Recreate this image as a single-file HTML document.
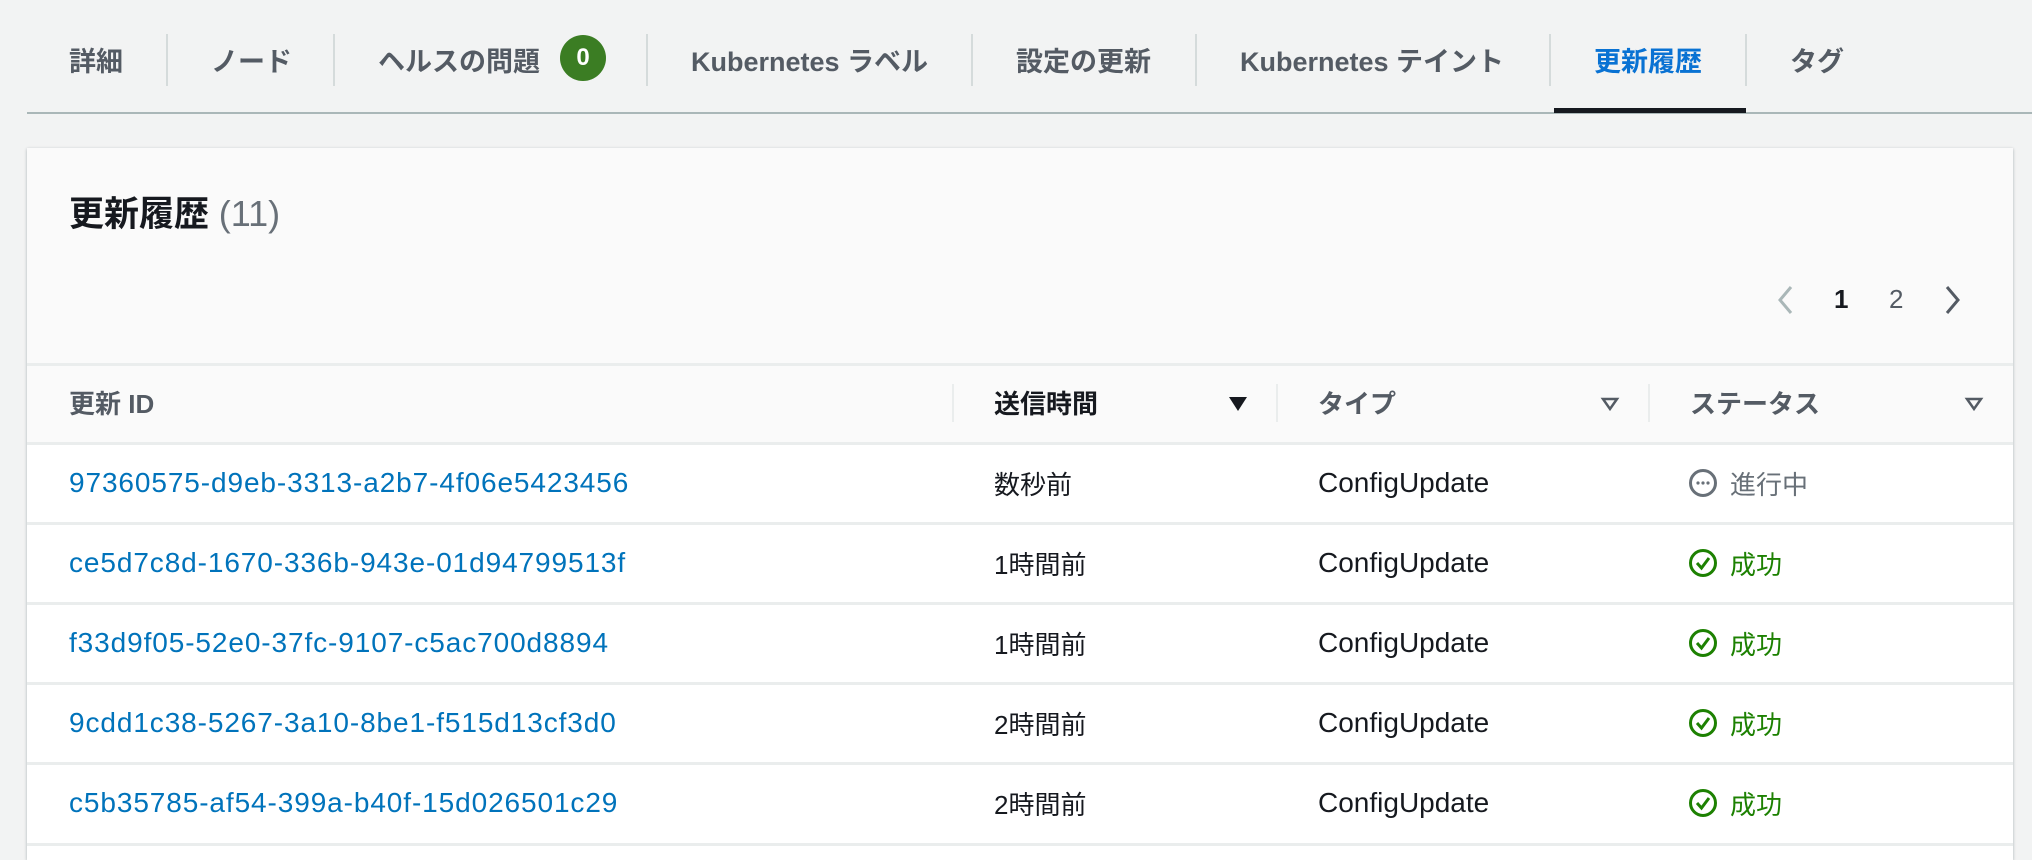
<!DOCTYPE html>
<html><head><meta charset="utf-8"><style>
*{margin:0;padding:0;box-sizing:border-box}
html{width:2032px;height:860px;overflow:hidden}
body{width:2032px;height:860px;background:#f2f3f3;font-family:"Liberation Sans","Noto Sans CJK JP",sans-serif;position:relative;overflow:hidden;color:#16191f}
.a{position:absolute;white-space:nowrap}
.tab{font-size:27px;font-weight:bold;color:#545b64;top:40px}
.sep{position:absolute;top:34px;height:52px;width:2px;background:#d5dbdb}
.card{position:absolute;left:27px;top:148px;width:1986px;height:712px;background:#fafafa;box-shadow:0 1px 3px rgba(0,28,36,.3)}
.hl{position:absolute;left:27px;width:1986px;height:3px;background:#eaeded}
.row{position:absolute;left:27px;width:1986px;height:78px;background:#fff}
.th{font-size:26px;font-weight:bold;color:#545b64;top:384px}
.td{font-size:28px;color:#16191f}
.jp{font-size:26px;color:#16191f}
.lk{font-size:28px;color:#0073bb;letter-spacing:0.9px}
.vs{position:absolute;top:384px;height:38px;width:2px;background:#eaeded}
.ok{color:#1d8102}
</style></head><body>
<div class="a tab" style="left:69px">詳細</div>
<div class="sep" style="left:166px"></div>
<div class="a tab" style="left:211px">ノード</div>
<div class="sep" style="left:333px"></div>
<div class="a tab" style="left:378px">ヘルスの問題</div>
<div class="a" style="left:560px;top:35px;width:46px;height:46px;border-radius:23px;background:#3b7d23;color:#fff;font-size:24px;font-weight:bold;text-align:center;line-height:46px">0</div>
<div class="sep" style="left:646px"></div>
<div class="a tab" style="left:691px">Kubernetes ラベル</div>
<div class="sep" style="left:971px"></div>
<div class="a tab" style="left:1016px">設定の更新</div>
<div class="sep" style="left:1195px"></div>
<div class="a tab" style="left:1240px">Kubernetes テイント</div>
<div class="sep" style="left:1549px"></div>
<div class="a tab" style="left:1594px;color:#0972d3">更新履歴</div>
<div class="sep" style="left:1745px"></div>
<div class="a tab" style="left:1790px">タグ</div>
<div class="a" style="left:27px;top:112px;width:2005px;height:2px;background:#aab7b8"></div>
<div class="a" style="left:1554px;top:108px;width:192px;height:5px;background:#16191f"></div>

<div class="card"></div>
<div class="a" style="left:69px;top:186px;font-size:35px;font-weight:bold">更新履歴 <span style="font-weight:normal;color:#687078;font-size:36px">(11)</span></div>
<svg class="a" style="left:1774px;top:284px" width="22" height="32"><path d="M17 3 L6 16 L17 29" fill="none" stroke="#aab7b8" stroke-width="3"/></svg>
<div class="a" style="left:1834px;top:284px;font-size:26px;font-weight:bold">1</div>
<div class="a" style="left:1889px;top:284px;font-size:26px;color:#545b64">2</div>
<svg class="a" style="left:1942px;top:284px" width="22" height="32"><path d="M5 3 L16 16 L5 29" fill="none" stroke="#545b64" stroke-width="3"/></svg>

<div class="hl" style="top:363px"></div>
<div class="a th" style="left:69px">更新 ID</div>
<div class="vs" style="left:952px"></div>
<div class="a th" style="left:994px;color:#16191f">送信時間</div>
<svg class="a" style="left:1227px;top:395px" width="22" height="18"><path d="M2 2 H20 L11 16Z" fill="#16191f"/></svg>
<div class="vs" style="left:1276px"></div>
<div class="a th" style="left:1318px">タイプ</div>
<svg class="a" style="left:1600px;top:396px" width="20" height="16"><path d="M3 3 H17 L10 13Z" fill="none" stroke="#545b64" stroke-width="2.5"/></svg>
<div class="vs" style="left:1648px"></div>
<div class="a th" style="left:1690px">ステータス</div>
<svg class="a" style="left:1964px;top:396px" width="20" height="16"><path d="M3 3 H17 L10 13Z" fill="none" stroke="#545b64" stroke-width="2.5"/></svg>

<div class="row" style="top:444px"></div>
<div class="row" style="top:525px"></div>
<div class="row" style="top:605px"></div>
<div class="row" style="top:685px"></div>
<div class="row" style="top:765px"></div>
<div class="row" style="top:846px;height:14px"></div>
<div class="hl" style="top:442px"></div>
<div class="hl" style="top:522px"></div>
<div class="hl" style="top:602px"></div>
<div class="hl" style="top:682px"></div>
<div class="hl" style="top:762px"></div>
<div class="hl" style="top:843px"></div>

<div class="a lk" style="left:69px;top:467px">97360575-d9eb-3313-a2b7-4f06e5423456</div>
<div class="a jp" style="left:994px;top:465px">数秒前</div>
<div class="a td" style="left:1318px;top:467px">ConfigUpdate</div>
<svg class="a" style="left:1688px;top:468px" width="30" height="30"><circle cx="15" cy="15" r="12.5" fill="none" stroke="#687078" stroke-width="3"/><circle cx="10" cy="15" r="1.6" fill="#687078"/><circle cx="15" cy="15" r="1.6" fill="#687078"/><circle cx="20" cy="15" r="1.6" fill="#687078"/></svg>
<div class="a jp" style="left:1730px;top:465px;color:#687078">進行中</div>

<div class="a lk" style="left:69px;top:547px">ce5d7c8d-1670-336b-943e-01d94799513f</div>
<div class="a jp" style="left:994px;top:545px">1時間前</div>
<div class="a td" style="left:1318px;top:547px">ConfigUpdate</div>
<svg class="a" style="left:1688px;top:548px" width="30" height="30"><circle cx="15" cy="15" r="12.5" fill="none" stroke="#1d8102" stroke-width="3"/><path d="M9 15 L13.5 20 L21 10" fill="none" stroke="#1d8102" stroke-width="3"/></svg>
<div class="a jp ok" style="left:1730px;top:545px">成功</div>

<div class="a lk" style="left:69px;top:627px">f33d9f05-52e0-37fc-9107-c5ac700d8894</div>
<div class="a jp" style="left:994px;top:625px">1時間前</div>
<div class="a td" style="left:1318px;top:627px">ConfigUpdate</div>
<svg class="a" style="left:1688px;top:628px" width="30" height="30"><circle cx="15" cy="15" r="12.5" fill="none" stroke="#1d8102" stroke-width="3"/><path d="M9 15 L13.5 20 L21 10" fill="none" stroke="#1d8102" stroke-width="3"/></svg>
<div class="a jp ok" style="left:1730px;top:625px">成功</div>

<div class="a lk" style="left:69px;top:707px">9cdd1c38-5267-3a10-8be1-f515d13cf3d0</div>
<div class="a jp" style="left:994px;top:705px">2時間前</div>
<div class="a td" style="left:1318px;top:707px">ConfigUpdate</div>
<svg class="a" style="left:1688px;top:708px" width="30" height="30"><circle cx="15" cy="15" r="12.5" fill="none" stroke="#1d8102" stroke-width="3"/><path d="M9 15 L13.5 20 L21 10" fill="none" stroke="#1d8102" stroke-width="3"/></svg>
<div class="a jp ok" style="left:1730px;top:705px">成功</div>

<div class="a lk" style="left:69px;top:787px">c5b35785-af54-399a-b40f-15d026501c29</div>
<div class="a jp" style="left:994px;top:785px">2時間前</div>
<div class="a td" style="left:1318px;top:787px">ConfigUpdate</div>
<svg class="a" style="left:1688px;top:788px" width="30" height="30"><circle cx="15" cy="15" r="12.5" fill="none" stroke="#1d8102" stroke-width="3"/><path d="M9 15 L13.5 20 L21 10" fill="none" stroke="#1d8102" stroke-width="3"/></svg>
<div class="a jp ok" style="left:1730px;top:785px">成功</div>
</body></html>
